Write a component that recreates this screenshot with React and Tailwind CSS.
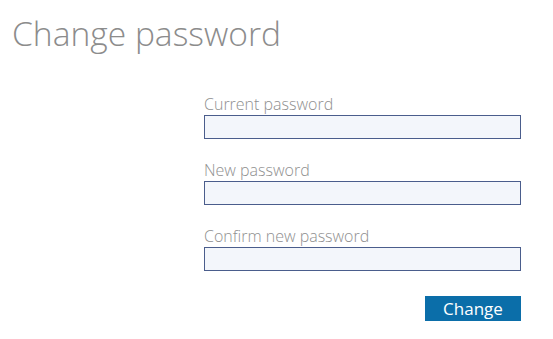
export default function App() {
  const fields = ["Current password", "New password", "Confirm new password"];
  return (
    <div className="w-[553px] h-[339px] bg-white overflow-hidden" style={{ fontFamily: '"Open Sans", sans-serif' }}>
      <h1 className="pl-[12px] pt-[11px] text-[33.6px] leading-[45px] font-light text-[#8c8c8c]">Change password</h1>
      <div className="ml-[204px] w-[317px] mt-[38px] flex flex-col">
        {fields.map((f) => (
          <div key={f} className="flex flex-col mb-[21px]">
            <label className="text-[16px] leading-[20px] font-light text-[#8f8f8f]">{f}</label>
            <input type="password" className="mt-[1px] h-[24px] w-full border border-[#4a5d8c] bg-[#f3f6fb] outline-none" />
          </div>
        ))}
        <div className="flex justify-end mt-[4px]">
          <button className="w-[96px] h-[25px] bg-[#0b6ea9] text-white text-[17px] leading-[25px]">Change</button>
        </div>
      </div>
    </div>
  );
}
